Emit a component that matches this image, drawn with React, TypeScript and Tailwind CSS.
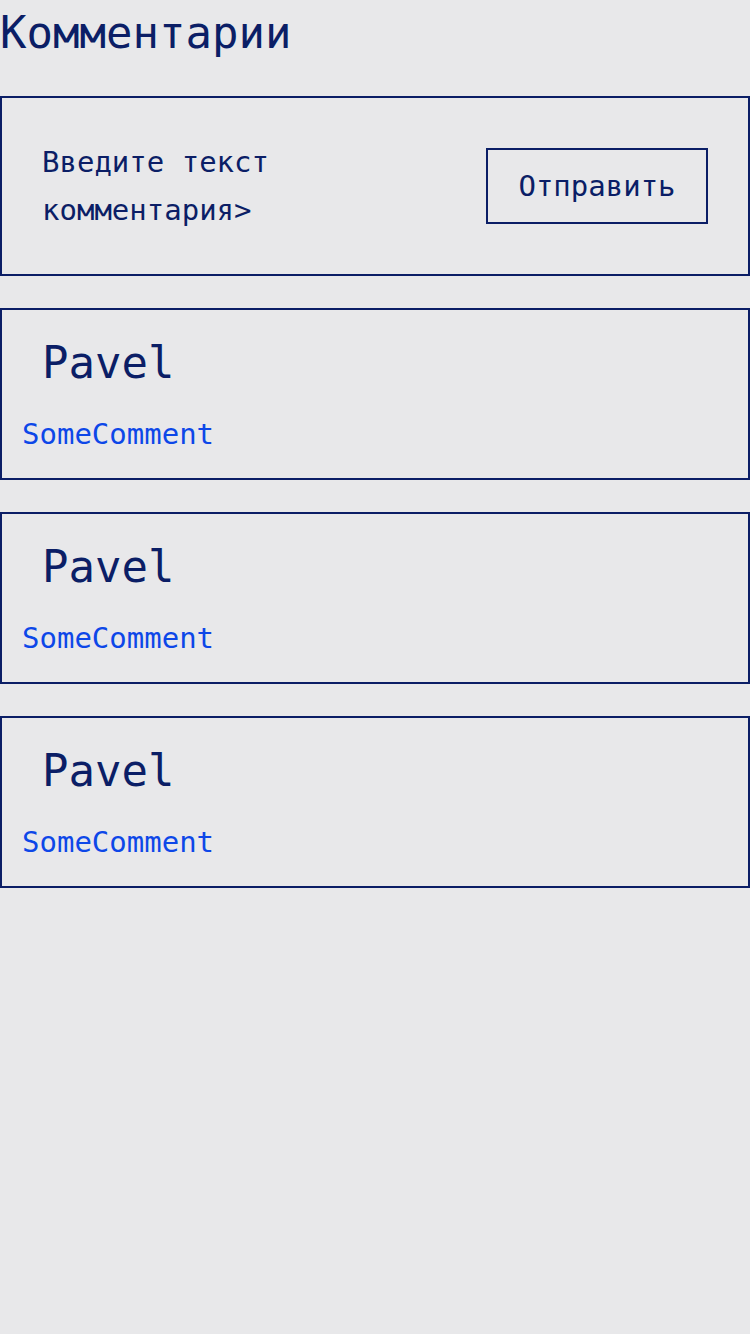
import React from "react";

const comments = [
  { name: "Pavel", text: "SomeComment" },
  { name: "Pavel", text: "SomeComment" },
  { name: "Pavel", text: "SomeComment" },
];

export default function App() {
  return (
    <div
      className="min-h-[1334px] w-[750px] bg-[#e8e8ea] text-[#0b1e66]"
      style={{ fontFamily: '"DejaVu Sans Mono", "Liberation Mono", monospace' }}
    >
      <h1 className="m-0 text-[44px] leading-[66px] font-normal">Комментарии</h1>

      <div className="mt-[30px] flex h-[180px] items-center justify-between border-2 border-[#0b1e66] pl-10 pr-10">
        <div className="w-[300px] text-[29px] leading-[48px]">Введите текст комментария&gt;</div>
        <button className="flex h-[76px] w-[222px] items-center justify-center border-2 border-[#0b1e66] bg-transparent text-[29px] leading-none text-[#0b1e66]">
          Отправить
        </button>
      </div>

      {comments.map((c, i) => (
        <div key={i} className="mt-[32px] flex flex-col border-2 border-[#0b1e66] px-5 pt-5 pb-[22px]">
          <div className="ml-5 text-[44px] leading-[66px]">{c.name}</div>
          <div className="mt-[17px] text-[29px] leading-[43px] text-[#0d47e8]">{c.text}</div>
        </div>
      ))}
    </div>
  );
}
